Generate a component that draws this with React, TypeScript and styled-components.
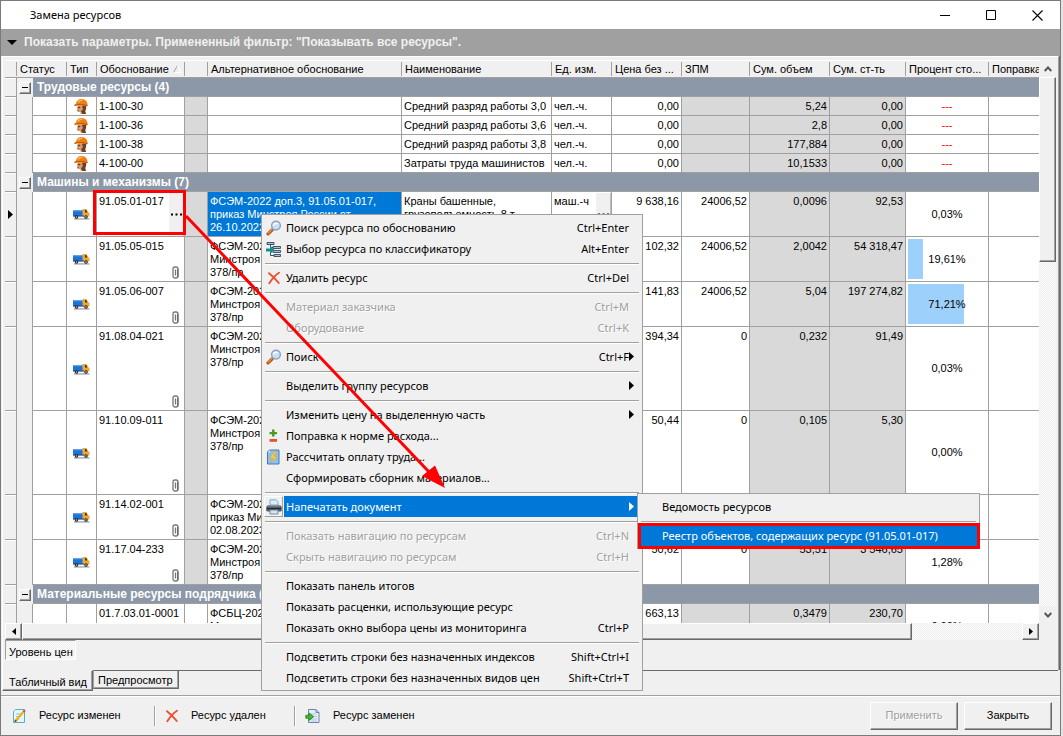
import React from "react";
import styled, { createGlobalStyle, css } from "styled-components";

const LINE = "#a0a0a0";
const FACE = "#f0f0f0";
const DARK = "#696969";
const GROUP = "#8c97a8";
const BLUE = "#0078d7";
const DITHER = "repeating-conic-gradient(#ffffff 0 25%, #ececec 0 50%) 0 0 / 2px 2px";

const GlobalStyle = createGlobalStyle`
  * { box-sizing: border-box; }
  body {
    margin: 0;
    background: #e4e4e4;
    color: #000;
    font: 11px/13px "Liberation Sans", Arial, sans-serif;
  }
  button {
    font: inherit;
    color: inherit;
    margin: 0;
    padding: 0;
    border: 0;
    background: none;
    text-align: left;
  }
  svg { display: block; flex: none; }
`;

const raised = css`
  border: 1px solid;
  border-color: #fff ${DARK} ${DARK} #fff;
  box-shadow: inset -1px -1px 0 ${LINE};
  background: ${FACE};
`;

const Window = styled.div`
  position: relative;
  display: flex;
  flex-direction: column;
  height: 100vh;
  margin-right: 2px;
  border: 1px solid #7a7a7a;
  background: ${FACE};
  overflow: hidden;
`;

const TitleBar = styled.header`
  display: flex;
  align-items: center;
  height: 28px;
  flex: none;
  padding-left: 29px;
  background: #fff;
`;

const Title = styled.h1`
  flex: 1;
  margin: 0;
  font: 11px/16px "Noto Sans", "Open Sans", sans-serif;
`;

const CaptionButton = styled.button`
  display: flex;
  align-items: center;
  justify-content: center;
  width: 46px;
  height: 26px;
`;

const FilterBar = styled.button`
  display: flex;
  align-items: center;
  gap: 7px;
  height: 27px;
  flex: none;
  padding-left: 6px;
  background: ${LINE};
  color: ${FACE};
  font-weight: bold;
  font-size: 12px;
`;

const Panel = styled.main`
  display: flex;
  flex-direction: column;
  flex: 1;
  min-height: 0;
  margin: 0 1px;
  padding: 3px 2px 0;
  border: 1px solid;
  border-color: #fff ${LINE} ${LINE} #fff;
  border-bottom: 0;
  box-shadow: 1px 0 0 ${DARK};
`;

const GridArea = styled.div`
  display: grid;
  grid-template-columns: minmax(0, 1fr) 17px;
  grid-template-rows: minmax(0, 1fr) 17px;
  flex: 1;
  min-height: 0;
`;

const Viewport = styled.div`
  overflow: hidden;
`;

const Table = styled.table`
  width: 100%;
  table-layout: fixed;
  border-spacing: 0;
`;

const Th = styled.th`
  height: 18px;
  padding: 1px 0;
  border-top: 1px solid #fff;
  border-bottom: 1px solid ${LINE};
  background: ${FACE};
  font-weight: normal;
  text-align: left;
`;

const HeadLabel = styled.div<{ $last?: boolean }>`
  display: flex;
  align-items: center;
  gap: 4px;
  height: 14px;
  padding-left: 3px;
  border-right: ${(p) => (p.$last ? "0" : `1px solid ${LINE}`)};
  white-space: nowrap;
  overflow: hidden;
`;

const Td = styled.td<{ $tone?: "gray" | "blue"; $align?: "right" | "center"; $lines?: number }>`
  height: ${(p) => (p.$lines ?? 1) * 13 + 6}px;
  padding: 3px 2px 2px;
  border-right: 1px solid ${LINE};
  border-bottom: 1px solid ${LINE};
  background: ${(p) => (p.$tone === "gray" ? "#d9d9d9" : p.$tone === "blue" ? BLUE : "#fff")};
  color: ${(p) => (p.$tone === "blue" ? "#fff" : "#000")};
  text-align: ${(p) => p.$align ?? "left"};
  vertical-align: top;
  white-space: pre;
  overflow: hidden;
`;

const LastTd = styled(Td)`
  border-right: 0;
`;

const IndicatorTd = styled.td`
  padding: 0 0 0 3px;
  border-right: 1px solid ${LINE};
  border-bottom: 1px solid ${LINE};
  background: ${FACE};
  box-shadow: inset 0 1px 0 #fff;
`;

const IndentTd = styled.td<{ $group?: boolean }>`
  padding: 0 0 0 2px;
  border-right: ${(p) => (p.$group ? "0" : `1px solid ${LINE}`)};
  background: ${FACE};
`;

const GroupTd = styled.td`
  height: 19px;
  padding: 0 0 0 4px;
  border-bottom: 1px solid ${LINE};
  background: ${GROUP};
  color: #fff;
  font-size: 12px;
  font-weight: bold;
  white-space: nowrap;
`;

const Expander = styled.button`
  ${raised}
  display: flex;
  align-items: center;
  justify-content: center;
  width: 12px;
  height: 12px;
`;

const IconTd = styled(Td)`
  padding: 0 6px;
  vertical-align: middle;
`;

const EditTd = styled(Td)`
  padding: 0 0 0 2px;
`;

const EditBox = styled.div<{ $lines: number }>`
  display: flex;
  justify-content: space-between;
  height: ${(p) => p.$lines * 13 + 5}px;
  padding-top: 3px;
`;

const MoreButton = styled.button`
  display: flex;
  align-items: center;
  justify-content: center;
  width: 15px;
  margin-top: -2px;
  border-right: 1px solid #c0c0c0;
  background: ${FACE};
`;

const ClipSlot = styled.span`
  align-self: flex-end;
  padding: 0 5px 2px 0;
`;

const PercentTd = styled(Td)`
  padding: 2px;
`;

const Percent = styled.div<{ $lines: number; $none?: boolean }>`
  display: grid;
  align-items: center;
  justify-items: center;
  height: ${(p) => p.$lines * 13 + 1}px;
  color: ${(p) => (p.$none ? "#f00" : "#000")};
  & > * { grid-area: 1 / 1; }
`;

const Bar = styled.i`
  justify-self: start;
  height: 100%;
  background: #9dd0fa;
`;

const VScroll = styled.div`
  display: flex;
  flex-direction: column;
  background: ${DITHER};
`;

const VArrow = styled.button`
  display: flex;
  align-items: center;
  justify-content: center;
  height: 17px;
  background: ${FACE};
`;

const VThumb = styled.div`
  ${raised}
  height: 185px;
`;

const Grow = styled.div`
  flex: 1;
`;

const HScroll = styled.div`
  display: flex;
  background: ${DITHER};
`;

const HArrow = styled.button`
  ${raised}
  display: flex;
  align-items: center;
  justify-content: center;
  width: 17px;
`;

const HThumb = styled.div`
  ${raised}
  flex: 889;
`;

const HTrack = styled.div`
  flex: 110;
`;

const PriceLevel = styled.div`
  display: flex;
  height: 30px;
  flex: none;
`;

const PriceButton = styled.button`
  height: 20px;
  padding: 4px 2px 0 3px;
  border: 1px solid;
  border-color: ${LINE} #fff #fff ${LINE};
  background: ${DITHER};
`;

const Tabs = styled.nav`
  display: flex;
  align-items: flex-start;
  height: 25px;
  flex: none;
  padding: 0 2px 0 1px;
`;

const Tab = styled.button<{ $active?: boolean }>`
  height: ${(p) => (p.$active ? 21 : 19)}px;
  padding: ${(p) => (p.$active ? "3px 5px 0 6px" : "1px 5px 0 4px")};
  border: 1px solid;
  border-color: ${(p) => (p.$active ? `${FACE} ${DARK} ${DARK} #fff` : `${DARK} ${DARK} ${DARK} ${LINE}`)};
  box-shadow: inset -1px -1px 0 ${LINE};
`;

const TabLine = styled.div`
  flex: 1;
  border-top: 1px solid ${DARK};
`;

const Footer = styled.footer`
  display: flex;
  align-items: center;
  height: 40px;
  flex: none;
  padding: 0 8px 0 10px;
  border-top: 1px solid ${LINE};
  box-shadow: inset 0 1px 0 #fff;
`;

const Legend = styled.div<{ $w: number }>`
  display: flex;
  align-items: center;
  gap: 12px;
  width: ${(p) => p.$w}px;
`;

const Divider = styled.div`
  width: 2px;
  height: 20px;
  margin-right: 9px;
  border-left: 1px solid ${LINE};
  border-right: 1px solid #fff;
`;

const DialogButton = styled.button`
  ${raised}
  width: 88px;
  height: 28px;
  margin-left: 6px;
  text-align: center;
  &:disabled {
    color: ${LINE};
    text-shadow: 1px 1px 0 #fff;
  }
`;

const Menu = styled.div`
  position: absolute;
  left: 260px;
  top: 213px;
  width: 382px;
  padding: 2px;
  border: 1px solid ${LINE};
  background: ${FACE};
  font: 11px/21px "Noto Sans", "Open Sans", sans-serif;
`;

const SubMenu = styled(Menu)`
  left: calc(100% - 3px);
  top: -3px;
  width: 343px;
`;

const ItemWrap = styled.div`
  position: relative;
`;

const Item = styled.button`
  display: grid;
  grid-template-columns: 20px minmax(0, 1fr) 8px;
  align-items: stretch;
  width: 100%;
  height: 21px;
  padding-right: 3px;
  white-space: nowrap;
  &:disabled {
    color: ${LINE};
    text-shadow: 1px 1px 0 #fff;
  }
`;

const ItemIcon = styled.span<{ $selected?: boolean }>`
  display: flex;
  align-items: center;
  justify-content: center;
  margin-right: 1px;
  ${(p) =>
    p.$selected &&
    css`
      border: 1px solid;
      border-color: #fff ${LINE} ${LINE} #fff;
    `}
`;

const ItemText = styled.span<{ $selected?: boolean }>`
  display: flex;
  justify-content: space-between;
  padding-left: 2px;
  ${(p) => p.$selected && css`background: ${BLUE}; color: #fff;`}
`;

const ItemArrow = styled.span<{ $selected?: boolean }>`
  display: flex;
  align-items: center;
  ${(p) => p.$selected && css`background: ${BLUE}; color: #fff;`}
`;

const Separator = styled.hr`
  height: 8px;
  margin: 0;
  border: 0;
  background: linear-gradient(${LINE} 0 1px, #fff 1px 2px) 1px 4px / calc(100% - 2px) 2px no-repeat;
`;

const Marks = styled.svg`
  position: absolute;
  left: 0;
  top: 0;
  pointer-events: none;
`;

/* ---------- icons ---------- */

const TriRight = () => (
  <svg width="5" height="9" viewBox="0 0 5 9">
    <path d="M0 0L5 4.500L0 9Z" fill="currentColor" />
  </svg>
);

const TriLeft = () => (
  <svg width="4" height="7" viewBox="0 0 4 7">
    <path d="M4 0L0 3.500L4 7Z" fill="#000" />
  </svg>
);

const Dots = () => (
  <svg width="11" height="3" viewBox="0 0 11 3">
    <path d="M0 .5h2v2H0zM4.500 .5h2v2h-2zM9 .5h2v2H9z" fill="#000" />
  </svg>
);

const Clip = () => (
  <svg width="7" height="13" viewBox="0 0 7 13">
    <path d="M3.500 3.500V9.500M1 8V3a2 2 0 0 1 2-2h1a2 2 0 0 1 2 2v7a2 2 0 0 1-2 2H3.200a2 2 0 0 1-2.200-2V3" fill="none" stroke="#777" strokeWidth="1.300" />
    <path d="M5.800 3v8" stroke="#444" strokeWidth=".8" />
  </svg>
);

const Worker = () => (
  <svg width="16" height="16" viewBox="0 0 16 16">
    <path d="M4.500 7.500V10l-1 1.500h1V14h3v2h5.500l-.5-3 1-3.500V7Z" fill="#d79a6c" />
    <path d="M9 8l4-1v4l-1 2 1 3H9.500L8 13.500 10 11Z" fill="#6b4028" />
    <path d="M5 9h2v1H5zM4 12.500h2" stroke="#8a5433" strokeWidth=".6" fill="#3c2414" />
    <path d="M1.500 7.500C1 6.500 2 6 3 6 3.200 3 5.500 1 8.500 1c3 0 5.500 1.800 6 5l.2 1.600C12.500 8.500 11 7.500 8 7.500Z" fill="#f07f12" />
    <path d="M5 4.500C6 2.500 8 2 9.500 2.200" stroke="#ffc06a" strokeWidth="1.300" fill="none" />
    <path d="M1.500 7.500C5 6 10 6.200 14.600 7.700" stroke="#b95606" strokeWidth="1" fill="none" />
  </svg>
);

const Truck = () => (
  <svg width="17" height="12" viewBox="0 0 17 12">
    <path d="M1 10.500h15.500v.9H1z" fill="#777" />
    <path d="M0 2h10v6H0z" fill="#1c72d6" />
    <path d="M0 2h10v1.300H0z" fill="#5aa2ea" />
    <path d="M9.500 1h4L15.500 4.500l1 .5v3.500h-7Z" fill="#f4a630" />
    <path d="M12 2h1.200l1.200 2.600H12Z" fill="#2d3748" />
    <path d="M0 7.500h11V8.600H0z" fill="#1d4f94" />
    <circle cx="3.500" cy="9" r="1.800" fill="#222" />
    <circle cx="13" cy="9" r="1.800" fill="#222" />
    <circle cx="3.500" cy="9" r=".8" fill="#ccc" />
    <circle cx="13" cy="9" r=".8" fill="#ccc" />
  </svg>
);

const Magnifier = () => (
  <svg width="16" height="16" viewBox="0 0 16 16">
    <path d="M2 13.800L6 10" stroke="#b0531a" strokeWidth="3.200" strokeLinecap="round" />
    <path d="M2 13.200L5.800 9.600" stroke="#ef9a4c" strokeWidth="1.200" strokeLinecap="round" />
    <circle cx="10" cy="5.600" r="4.400" fill="#c6defb" stroke="#93a0bb" strokeWidth="1.400" />
    <path d="M7.500 5.500C8 3.500 10 2.800 12 3.800" stroke="#fff" strokeWidth="1.400" fill="none" />
  </svg>
);

const Tree = () => (
  <svg width="16" height="16" viewBox="0 0 16 16">
    <path d="M1 1.500h7v2H1zM7 5.500h7.500v2H7zM7 9.500h7.500v2H7zM8 13.500h6.500v2H8z" fill="#a8c0d8" stroke="#34495e" strokeWidth=".9" />
    <path d="M4.500 3.500v11H8M4.500 6.500H7" stroke="#34495e" fill="none" />
    <path d="M0 7.500h4V5l4.500 4L4 13v-2.500H0Z" fill="#168d8d" />
  </svg>
);

const Cross = () => (
  <svg width="14" height="14" viewBox="0 0 14 14">
    <path d="M2 2.200C5 4.500 8.500 8 11.800 12M12 1.800C8.500 4 5 8 2.300 12.300" stroke="#ee4f2f" strokeWidth="1.900" fill="none" strokeLinecap="round" />
  </svg>
);

const PlusMinus = () => (
  <svg width="16" height="16" viewBox="0 0 16 16">
    <path d="M6 1.500h2.500V4H11v2.200H8.500V8.500H6V6.200H3.500V4H6Z" fill="#4c9a24" />
    <path d="M3.500 11h7.500v2.800H3.500z" fill="#e8502c" />
  </svg>
);

const Lightning = () => (
  <svg width="16" height="16" viewBox="0 0 16 16">
    <path d="M3.500 1H13v14H1.500V3Z" fill="#8cc0f2" stroke="#4678b4" />
    <path d="M2 3.300L3.800 1.500v2Z" fill="#fff" />
    <path d="M8.800 2.500L3.500 9H7l-2 5 6-6.800H7.500L10.500 2.500Z" fill="#ffd23c" stroke="#e8a010" strokeWidth=".6" />
  </svg>
);

const Printer = () => (
  <svg width="16" height="16" viewBox="0 0 16 16">
    <path d="M4 6V.8h6L12 2.800V6Z" fill="#d9ecfb" stroke="#6a9cc8" strokeWidth=".8" />
    <path d="M2 6h12l1.800 2v3.500l-1 1H1.200l-1-1V8Z" fill="#57606a" />
    <path d="M2 6.200h12v1.200H2z" fill="#98a2ac" />
    <path d="M1 9h14v1.200H1z" fill="#24292f" />
    <path d="M4 11h8V15H4z" fill="#cfe4f6" stroke="#5e7890" strokeWidth=".8" />
  </svg>
);

const PencilSheet = () => (
  <svg width="16" height="16" viewBox="0 0 16 16">
    <path d="M4.500 1.500h9v13h-11V3.500Z" fill="#e4f6fb" stroke="#58aec4" />
    <path d="M5 6h6M5 8.500h5M5 11h3" stroke="#8cc4d4" />
    <path d="M5 12.500L12.200 4" stroke="#f0b418" strokeWidth="2.400" />
    <path d="M11.500 3.200l1.500-1.700L14.800 3 13.300 4.800Z" fill="#e0503c" />
    <path d="M3.300 14.200l.7-2.600 2.100 1.500Z" fill="#4a3520" />
  </svg>
);

const ReplaceSheet = () => (
  <svg width="16" height="16" viewBox="0 0 16 16">
    <path d="M3.500 1.500h7.500l3 3v10H3.500Z" fill="#e6eefa" stroke="#6d82b0" />
    <path d="M11 1.500v3h3" fill="#b4c4e2" stroke="#6d82b0" />
    <path d="M6 6h5M6 8.500h6M6 11h6M6 13h6" stroke="#b4c4e2" />
    <path d="M.8 7.300h3.500V5l4.300 3.700-4.300 3.700v-2.200H.8Z" fill="#3fbb2c" stroke="#1d7d14" strokeWidth=".8" />
  </svg>
);

/* ---------- data ---------- */

type Row = {
  kind?: "worker" | "truck";
  code: string;
  alt?: string;
  name?: string;
  unit?: string;
  price: string;
  zpm?: string;
  volume: string;
  sum: string;
  percent?: number;
  lines: number;
  clip?: boolean;
  current?: boolean;
};

type Group = { title: string; material?: boolean; rows: Row[] };

const columns = [
  "Тип",
  "Обоснование",
  "",
  "Альтернативное обоснование",
  "Наименование",
  "Ед. изм.",
  "Цена без ...",
  "ЗПМ",
  "Сум. объем",
  "Сум. ст-ть",
  "Процент сто...",
  "Поправка",
];

const widths = [12, 16, 34, 30, 88, 23, 194, 150, 60, 70, 68, 80, 76, 83];

const minstroy = "ФСЭМ-2022,\nМинстроя\n378/пр";

const groups: Group[] = [
  {
    title: "Трудовые ресурсы (4)",
    rows: [
      { kind: "worker", code: "1-100-30", name: "Средний разряд работы 3,0", unit: "чел.-ч.", price: "0,00", volume: "5,24", sum: "0,00", lines: 1 },
      { kind: "worker", code: "1-100-36", name: "Средний разряд работы 3,6", unit: "чел.-ч.", price: "0,00", volume: "2,8", sum: "0,00", lines: 1 },
      { kind: "worker", code: "1-100-38", name: "Средний разряд работы 3,8", unit: "чел.-ч.", price: "0,00", volume: "177,884", sum: "0,00", lines: 1 },
      { kind: "worker", code: "4-100-00", name: "Затраты труда машинистов", unit: "чел.-ч.", price: "0,00", volume: "10,1533", sum: "0,00", lines: 1 },
    ],
  },
  {
    title: "Машины и механизмы (7)",
    rows: [
      { kind: "truck", code: "91.05.01-017", alt: "ФСЭМ-2022 доп.3, 91.05.01-017,\nприказ Минстроя России от\n26.10.2022", name: "Краны башенные,\nгрузоподъемность 8 т", unit: "маш.-ч", price: "9 638,16", zpm: "24006,52", volume: "0,0096", sum: "92,53", percent: 0.03, lines: 3, current: true },
      { kind: "truck", code: "91.05.05-015", alt: minstroy, price: "102,32", zpm: "24006,52", volume: "2,0042", sum: "54 318,47", percent: 19.61, lines: 3, clip: true },
      { kind: "truck", code: "91.05.06-007", alt: minstroy, price: "141,83", zpm: "24006,52", volume: "5,04", sum: "197 274,82", percent: 71.21, lines: 3, clip: true },
      { kind: "truck", code: "91.08.04-021", alt: minstroy, price: "394,34", zpm: "0", volume: "0,232", sum: "91,49", percent: 0.03, lines: 6, clip: true },
      { kind: "truck", code: "91.10.09-011", alt: minstroy, price: "50,44", zpm: "0", volume: "0,105", sum: "5,30", percent: 0, lines: 6, clip: true },
      { kind: "truck", code: "91.14.02-001", alt: "ФСЭМ-2022,\nприказ Минстроя\n02.08.2023", price: "", zpm: "", volume: "", sum: "", percent: 0, lines: 3, clip: true },
      { kind: "truck", code: "91.17.04-233", alt: minstroy, price: "50,62", zpm: "0", volume: "53,51", sum: "3 546,65", percent: 1.28, lines: 3, clip: true },
    ],
  },
  {
    title: "Материальные ресурсы подрядчика (3)",
    material: true,
    rows: [
      { code: "01.7.03.01-0001", alt: "ФСБЦ-2022,\nМинстроя", price: "663,13", volume: "0,3479", sum: "230,70", percent: 0, lines: 3 },
    ],
  },
];

const formatPercent = (n: number) => `${n.toFixed(2).replace(".", ",")}%`;

function DataRow({ row, material }: { row: Row; material?: boolean }) {
  const { lines } = row;
  return (
    <tr>
      <IndicatorTd>{row.current && <TriRight />}</IndicatorTd>
      <IndentTd />
      <Td $lines={lines} />
      <IconTd>
        {row.kind === "worker" && <Worker />}
        {row.kind === "truck" && <Truck />}
      </IconTd>
      <EditTd>
        <EditBox $lines={lines}>
          {row.code}
          {row.current && (
            <MoreButton aria-label="Выбрать"><Dots /></MoreButton>
          )}
          {row.clip && <ClipSlot><Clip /></ClipSlot>}
        </EditBox>
      </EditTd>
      <Td $tone={material ? undefined : "gray"} />
      <Td $tone={row.current ? "blue" : undefined}>{row.alt}</Td>
      <Td>{row.name}</Td>
      <EditTd>
        <EditBox $lines={lines}>
          {row.unit}
          {row.current && (
            <MoreButton aria-label="Выбрать"><Dots /></MoreButton>
          )}
        </EditBox>
      </EditTd>
      <Td $align="right">{row.price}</Td>
      <Td $align="right" $tone={row.zpm === undefined ? "gray" : undefined}>{row.zpm}</Td>
      <Td $align="right" $tone="gray">{row.volume}</Td>
      <Td $align="right" $tone="gray">{row.sum}</Td>
      <PercentTd>
        <Percent $lines={lines} $none={row.percent === undefined}>
          {row.percent !== undefined && row.percent > 2 && <Bar style={{ width: `${row.percent}%` }} />}
          <span>{row.percent === undefined ? "---" : formatPercent(row.percent)}</span>
        </Percent>
      </PercentTd>
      <LastTd />
    </tr>
  );
}

function ResourceTable() {
  return (
    <Table>
      <colgroup>
        {widths.map((w, i) => (
          <col key={i} width={w} />
        ))}
        <col />
      </colgroup>
      <thead>
        <tr>
          <Th><HeadLabel /></Th>
          <Th colSpan={2}><HeadLabel>Статус</HeadLabel></Th>
          {columns.map((label, i) => (
            <Th key={i}>
              <HeadLabel $last={i === columns.length - 1}>
                {label}
                {i === 1 && (
                  <svg width="9" height="8" viewBox="0 0 9 8">
                    <path d="M.5 7.500L4.500.5" stroke="#a0a0a0" />
                    <path d="M4.500.5L8.500 7.500H.5" stroke="#fff" fill="none" />
                  </svg>
                )}
              </HeadLabel>
            </Th>
          ))}
        </tr>
      </thead>
      <tbody>
        {groups.map((group) => (
          <React.Fragment key={group.title}>
            <tr>
              <IndicatorTd />
              <IndentTd $group>
                <Expander aria-label="Свернуть">
                  <svg width="6" height="1"><path d="M0 .5h6" stroke="#000" /></svg>
                </Expander>
              </IndentTd>
              <GroupTd colSpan={13}>{group.title}</GroupTd>
            </tr>
            {group.rows.map((row) => (
              <DataRow key={row.code} row={row} material={group.material} />
            ))}
          </React.Fragment>
        ))}
      </tbody>
    </Table>
  );
}

type Entry = {
  label: string;
  keys?: string;
  icon?: React.ReactNode;
  sub?: boolean;
  off?: boolean;
  children?: React.ReactNode;
};

function MenuEntry({ label, keys, icon, sub, off, children }: Entry) {
  const selected = Boolean(children);
  return (
    <ItemWrap>
      <Item role="menuitem" disabled={off}>
        <ItemIcon $selected={selected}>{icon}</ItemIcon>
        <ItemText $selected={selected}>
          <span>{label}</span>
          <span>{keys}</span>
        </ItemText>
        <ItemArrow $selected={selected}>{(sub || selected) && <TriRight />}</ItemArrow>
      </Item>
      {children}
    </ItemWrap>
  );
}

const SubItem = styled(Item)<{ $selected?: boolean }>`
  display: block;
  padding-left: 22px;
  ${(p) => p.$selected && css`background: ${BLUE}; color: #fff;`}
`;

function ContextMenu() {
  return (
    <Menu role="menu">
      <MenuEntry label="Поиск ресурса по обоснованию" keys="Ctrl+Enter" icon={<Magnifier />} />
      <MenuEntry label="Выбор ресурса по классификатору" keys="Alt+Enter" icon={<Tree />} />
      <Separator />
      <MenuEntry label="Удалить ресурс" keys="Ctrl+Del" icon={<Cross />} />
      <Separator />
      <MenuEntry label="Материал заказчика" keys="Ctrl+M" off />
      <MenuEntry label="Оборудование" keys="Ctrl+K" off />
      <Separator />
      <MenuEntry label="Поиск" keys="Ctrl+F" icon={<Magnifier />} sub />
      <Separator />
      <MenuEntry label="Выделить группу ресурсов" sub />
      <Separator />
      <MenuEntry label="Изменить цену на выделенную часть" sub />
      <MenuEntry label="Поправка к норме расхода..." icon={<PlusMinus />} />
      <MenuEntry label="Рассчитать оплату труда..." icon={<Lightning />} />
      <MenuEntry label="Сформировать сборник материалов..." />
      <Separator />
      <MenuEntry label="Напечатать документ" icon={<Printer />}>
        <SubMenu role="menu">
          <SubItem role="menuitem">Ведомость ресурсов</SubItem>
          <Separator />
          <SubItem role="menuitem" $selected>Реестр объектов, содержащих ресурс (91.05.01-017)</SubItem>
        </SubMenu>
      </MenuEntry>
      <Separator />
      <MenuEntry label="Показать навигацию по ресурсам" keys="Ctrl+N" off />
      <MenuEntry label="Скрыть навигацию по ресурсам" keys="Ctrl+H" off />
      <Separator />
      <MenuEntry label="Показать панель итогов" />
      <MenuEntry label="Показать расценки, использующие ресурс" />
      <MenuEntry label="Показать окно выбора цены из мониторинга" keys="Ctrl+P" />
      <Separator />
      <MenuEntry label="Подсветить строки без назначенных индексов" keys="Shift+Ctrl+I" />
      <MenuEntry label="Подсветить строки без назначенных видов цен" keys="Shift+Ctrl+T" />
    </Menu>
  );
}

export default function App() {
  return (
    <>
      <GlobalStyle />
      <Window>
        <TitleBar>
          <Title>Замена ресурсов</Title>
          <CaptionButton aria-label="Свернуть">
            <svg width="11" height="11"><path d="M0 5.500h10" stroke="#000" /></svg>
          </CaptionButton>
          <CaptionButton aria-label="Развернуть">
            <svg width="11" height="11"><path d="M.5 .5h9v9h-9z" stroke="#000" fill="none" /></svg>
          </CaptionButton>
          <CaptionButton aria-label="Закрыть окно">
            <svg width="11" height="11"><path d="M.5 .5l10 10M10.500 .5l-10 10" stroke="#000" strokeWidth="1.100" /></svg>
          </CaptionButton>
        </TitleBar>
        <FilterBar>
          <svg width="10" height="5"><path d="M0 0h10L5 5Z" fill="#000" /></svg>
          Показать параметры. Примененный фильтр: "Показывать все ресурсы".
        </FilterBar>
        <Panel>
          <GridArea>
            <Viewport><ResourceTable /></Viewport>
            <VScroll>
              <VArrow aria-label="Вверх">
                <svg width="8" height="6"><path d="M.7 5L4 1.500 7.300 5" stroke="#555" strokeWidth="1.900" fill="none" /></svg>
              </VArrow>
              <VThumb />
              <Grow />
              <VArrow aria-label="Вниз">
                <svg width="8" height="6"><path d="M.7 1L4 4.500 7.300 1" stroke="#555" strokeWidth="1.900" fill="none" /></svg>
              </VArrow>
            </VScroll>
            <HScroll>
              <HArrow aria-label="Влево"><TriLeft /></HArrow>
              <HThumb />
              <HTrack />
              <HArrow aria-label="Вправо">
                <svg width="4" height="7"><path d="M0 0L4 3.500L0 7Z" fill="#000" /></svg>
              </HArrow>
            </HScroll>
          </GridArea>
          <PriceLevel><PriceButton>Уровень цен</PriceButton></PriceLevel>
        </Panel>
        <Tabs>
          <Tab $active>Табличный вид</Tab>
          <Tab>Предпросмотр</Tab>
          <TabLine />
        </Tabs>
        <Footer>
          <Legend $w={143}><PencilSheet />Ресурс изменен</Legend>
          <Divider />
          <Legend $w={129}><Cross />Ресурс удален</Legend>
          <Divider />
          <Legend $w={130}><ReplaceSheet />Ресурс заменен</Legend>
          <Grow />
          <DialogButton disabled>Применить</DialogButton>
          <DialogButton>Закрыть</DialogButton>
        </Footer>
        <ContextMenu />
        <Marks width="1000" height="560" viewBox="1 1 1000 560">
          <path d="M94.500 191.500h90v42h-90zM639.500 524.500h339v23h-339z" fill="none" stroke="#f00" strokeWidth="3" />
          <path d="M186 216L430 473" stroke="#f00" strokeWidth="3" />
          <path d="M445 488L435 465.500 422 476Z" fill="#f00" />
        </Marks>
      </Window>
    </>
  );
}
